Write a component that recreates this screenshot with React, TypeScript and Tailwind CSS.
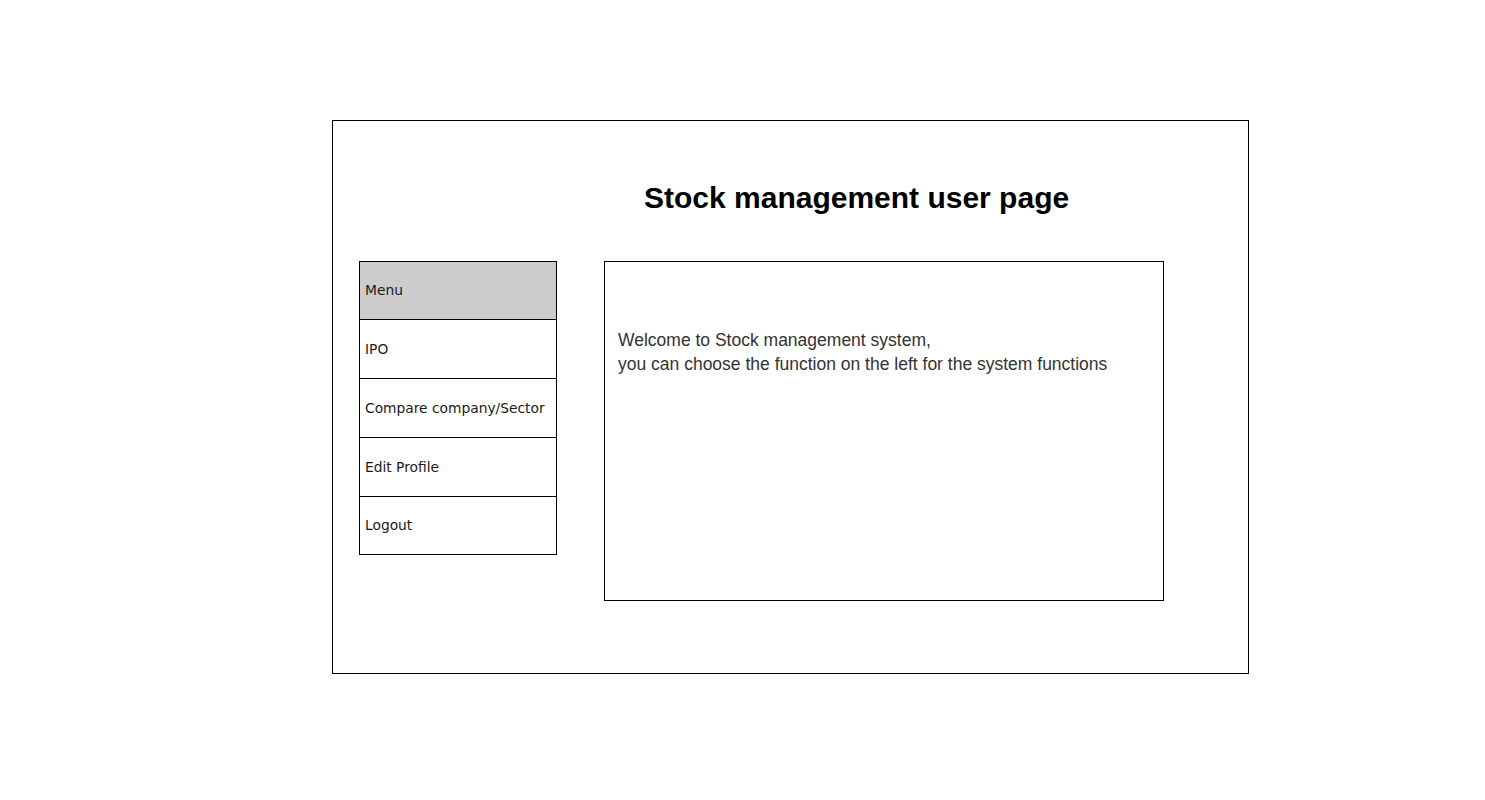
export default function App() {
  const items = ["IPO", "Compare company/Sector", "Edit Profile", "Logout"];

  return (
    <div className="min-h-screen w-full bg-white" style={{ fontFamily: "'Liberation Sans', Arial, sans-serif" }}>
      <div className="pt-[120px] pl-[332px]">
        {/* OUTER FRAME */}
        <div className="w-[917px] h-[554px] border border-black">
          {/* TITLE */}
          <div className="pt-[60px] pl-[311px]">
            <h1 className="text-[30px] leading-[34px] font-bold text-black">Stock management user page</h1>
          </div>

          <div className="flex items-start mt-[46px] pl-[26px]">
            {/* MENU */}
            <div
              className="w-[198px] border border-black text-[13.8px] text-[#1a1a1a]"
              style={{ fontFamily: "'DejaVu Sans', sans-serif" }}
            >
              <div className="h-[58px] bg-[#cccccc] border-b border-black flex items-center pl-[5px]">Menu</div>
              {items.map((item, i) => (
                <div
                  key={item}
                  className={`flex items-center pl-[5px] ${
                    i < items.length - 1 ? "h-[59px] border-b border-black" : "h-[57px]"
                  }`}
                >
                  {item}
                </div>
              ))}
            </div>

            {/* CONTENT */}
            <div className="ml-[47px] w-[560px] h-[340px] border border-black pt-[66px] pl-[13px] text-[17.5px] leading-[24px] text-[#333333]">
              <p>Welcome to Stock management system,</p>
              <p>you can choose the function on the left for the system functions</p>
            </div>
          </div>
        </div>
      </div>
    </div>
  );
}
